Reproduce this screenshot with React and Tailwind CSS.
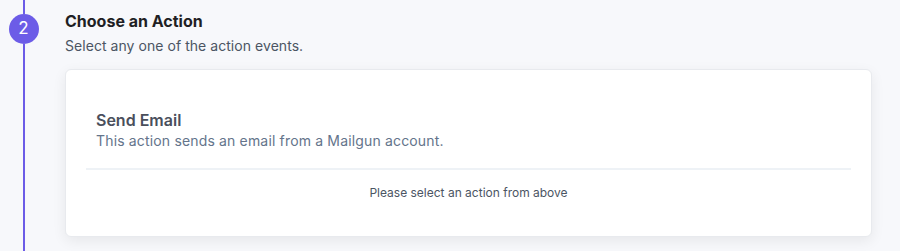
export default function App() {
  return (
    <div
      className="w-[900px] h-[251px] overflow-hidden bg-[#f7f8fb] flex"
      style={{ fontFamily: 'Inter, "Noto Sans", sans-serif' }}
    >
      {/* timeline rail */}
      <div className="w-[46px] shrink-0 flex flex-col items-center">
        <div className="w-[2px] h-[14px] bg-[#6c5ce7] ml-[1px]" />
        <div className="w-[30px] h-[30px] rounded-full bg-[#6c5ce7] text-white flex items-center justify-center text-[17px] ml-[1px]">
          2
        </div>
        <div className="w-[2px] flex-1 bg-[#6c5ce7] ml-[1px]" />
      </div>

      {/* step body */}
      <div className="flex-1 pl-[19px] pr-[28px] pt-[10px]">
        <h2 className="text-[16px] font-bold text-[#1f1f24] leading-[22px]">Choose an Action</h2>
        <p className="text-[14px] text-[#4b5563] mt-[4px] leading-[20px] tracking-[0.05px]">
          Select any one of the action events.
        </p>

        <div className="mt-[13px] bg-white rounded-[6px] border border-[#e8eaee] shadow-[0_4px_14px_rgba(0,0,0,0.07)] px-[20px] pt-[39px] pb-[34px]">
          <div className="px-[10px]">
            <div className="text-[16px] font-semibold text-[#4a4f5c] leading-[22px]">Send Email</div>
            <div className="text-[14px] text-[#64748b] leading-[20px] tracking-[0.16px]">
              This action sends an email from a Mailgun account.
            </div>
          </div>
          <div className="h-[2px] bg-[#eef2f6] mt-[17px]" />
          <div className="text-center text-[12px] text-[#4b5563] mt-[14px] leading-[18px]">
            Please select an action from above
          </div>
        </div>
      </div>
    </div>
  );
}
